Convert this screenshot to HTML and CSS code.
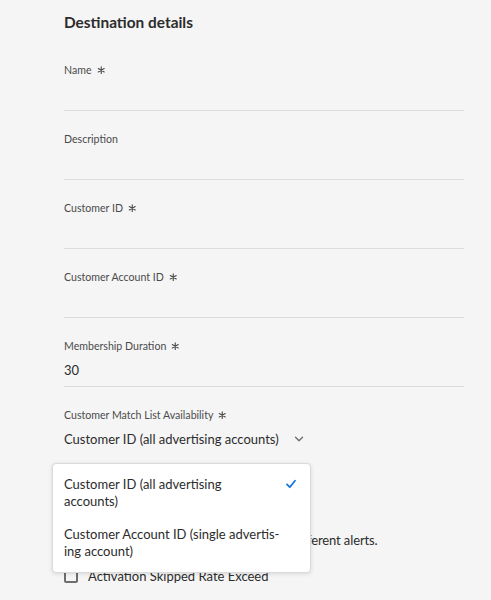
FILE: index.html
```html
<!DOCTYPE html>
<html>
<head>
<meta charset="utf-8">
<link rel="stylesheet" href="styles.css">
</head>
<body>
<main class="form">
  <h2 class="title">Destination details</h2>

  <div class="field">
    <div class="label">Name <svg class="req" viewBox="0 0 10 10"><path d="M5 1v8M1.5 3l7 4M8.5 3l-7 4" stroke="#4b4b4b" stroke-width="1.3" fill="none" stroke-linecap="round"/></svg></div>
    <div class="input"></div>
  </div>
  <div class="field">
    <div class="label">Description</div>
    <div class="input"></div>
  </div>
  <div class="field">
    <div class="label">Customer ID <svg class="req" viewBox="0 0 10 10"><path d="M5 1v8M1.5 3l7 4M8.5 3l-7 4" stroke="#4b4b4b" stroke-width="1.3" fill="none" stroke-linecap="round"/></svg></div>
    <div class="input"></div>
  </div>
  <div class="field">
    <div class="label">Customer Account ID <svg class="req" viewBox="0 0 10 10"><path d="M5 1v8M1.5 3l7 4M8.5 3l-7 4" stroke="#4b4b4b" stroke-width="1.3" fill="none" stroke-linecap="round"/></svg></div>
    <div class="input"></div>
  </div>
  <div class="field">
    <div class="label">Membership Duration <svg class="req" viewBox="0 0 10 10"><path d="M5 1v8M1.5 3l7 4M8.5 3l-7 4" stroke="#4b4b4b" stroke-width="1.3" fill="none" stroke-linecap="round"/></svg></div>
    <div class="input">30</div>
  </div>
  <div class="field picker-field">
    <div class="label">Customer Match List Availability <svg class="req" viewBox="0 0 10 10"><path d="M5 1v8M1.5 3l7 4M8.5 3l-7 4" stroke="#4b4b4b" stroke-width="1.3" fill="none" stroke-linecap="round"/></svg></div>
    <div class="picker">
      <span>Customer ID (all advertising accounts)</span>
      <svg class="chev" width="10" height="10" viewBox="0 0 10 10"><path d="M1.5 3.2 L5 6.7 L8.5 3.2" fill="none" stroke="#6e6e6e" stroke-width="1.4" stroke-linecap="round" stroke-linejoin="round"/></svg>
    </div>
    <div class="popover">
      <div class="option">
        <span class="opt-text selected">Customer ID (all advertising accounts)</span>
        <svg class="check" width="12" height="12" viewBox="0 0 12 12"><path d="M2 6.4 L4.8 9.2 L10 2.8" fill="none" stroke="#1473e6" stroke-width="1.8" stroke-linecap="round" stroke-linejoin="round"/></svg>
      </div>
      <div class="option">
        <span class="opt-text">Customer Account ID (single advertis&shy;ing account)</span>
      </div>
    </div>
  </div>

  <p class="alerts">Check the options below to subscribe to different alerts.</p>
  <label class="check-row"><span class="box"></span>Activation Skipped Rate Exceed</label>
</main>
</body>
</html>
```

FILE: styles.css
```css
html, body {
  margin: 0;
  padding: 0;
  background: #f5f5f5;
}
body {
  font-family: Lato, "Open Sans", sans-serif;
  color: #2c2c2c;
  overflow: hidden;
}
.form {
  width: 400px;
  padding: 12px 0 0 64px;
}
.title {
  margin: 0;
  font-size: 15.4px;
  line-height: 20px;
  font-weight: 700;
  color: #2c2c2c;
}
.field {
  margin-top: 30px;
  position: relative;
}
.field + .field {
  margin-top: 20px;
}
.label {
  display: flex;
  align-items: center;
  gap: 5px;
  font-size: 10.6px;
  line-height: 16px;
  color: #4b4b4b;
  height: 16px;
}
.req {
  width: 8.5px;
  height: 8.5px;
}
.input {
  box-sizing: border-box;
  height: 33px;
  border-bottom: 1px solid #dcdcdc;
  font-size: 13px;
  line-height: 18px;
  padding-top: 7px;
  color: #2c2c2c;
}
.picker {
  display: flex;
  align-items: center;
  gap: 15px;
  height: 32px;
  font-size: 13px;
  color: #2c2c2c;
}
.chev {
  display: block;
}
.popover {
  position: absolute;
  left: -12px;
  top: 56px;
  width: 259px;
  box-sizing: border-box;
  background: #fff;
  border: 1px solid #dadada;
  border-radius: 4px;
  box-shadow: 0 1px 4px rgba(0,0,0,0.12);
  padding: 4px 0;
  z-index: 2;
}
.option {
  display: flex;
  align-items: flex-start;
  padding: 8px 12px 8px 11px;
  font-size: 13px;
  line-height: 17px;
  color: #2c2c2c;
}
.opt-text {
  width: 220px;
  hyphens: manual;
}
.opt-text.selected {
  width: 200px;
}
.check {
  margin: 2px 1px 0 auto;
  flex: none;
}
.alerts {
  margin: 76px 0 0 0;
  font-size: 13px;
  line-height: 18px;
  letter-spacing: -0.11px;
  color: #2c2c2c;
  white-space: nowrap;
}
.check-row {
  display: flex;
  align-items: center;
  gap: 10px;
  margin-top: 18px;
  font-size: 13px;
  line-height: 18px;
  color: #2c2c2c;
}
.box {
  box-sizing: border-box;
  width: 14px;
  height: 14px;
  border: 2px solid #6e6e6e;
  border-radius: 2px;
}
```
